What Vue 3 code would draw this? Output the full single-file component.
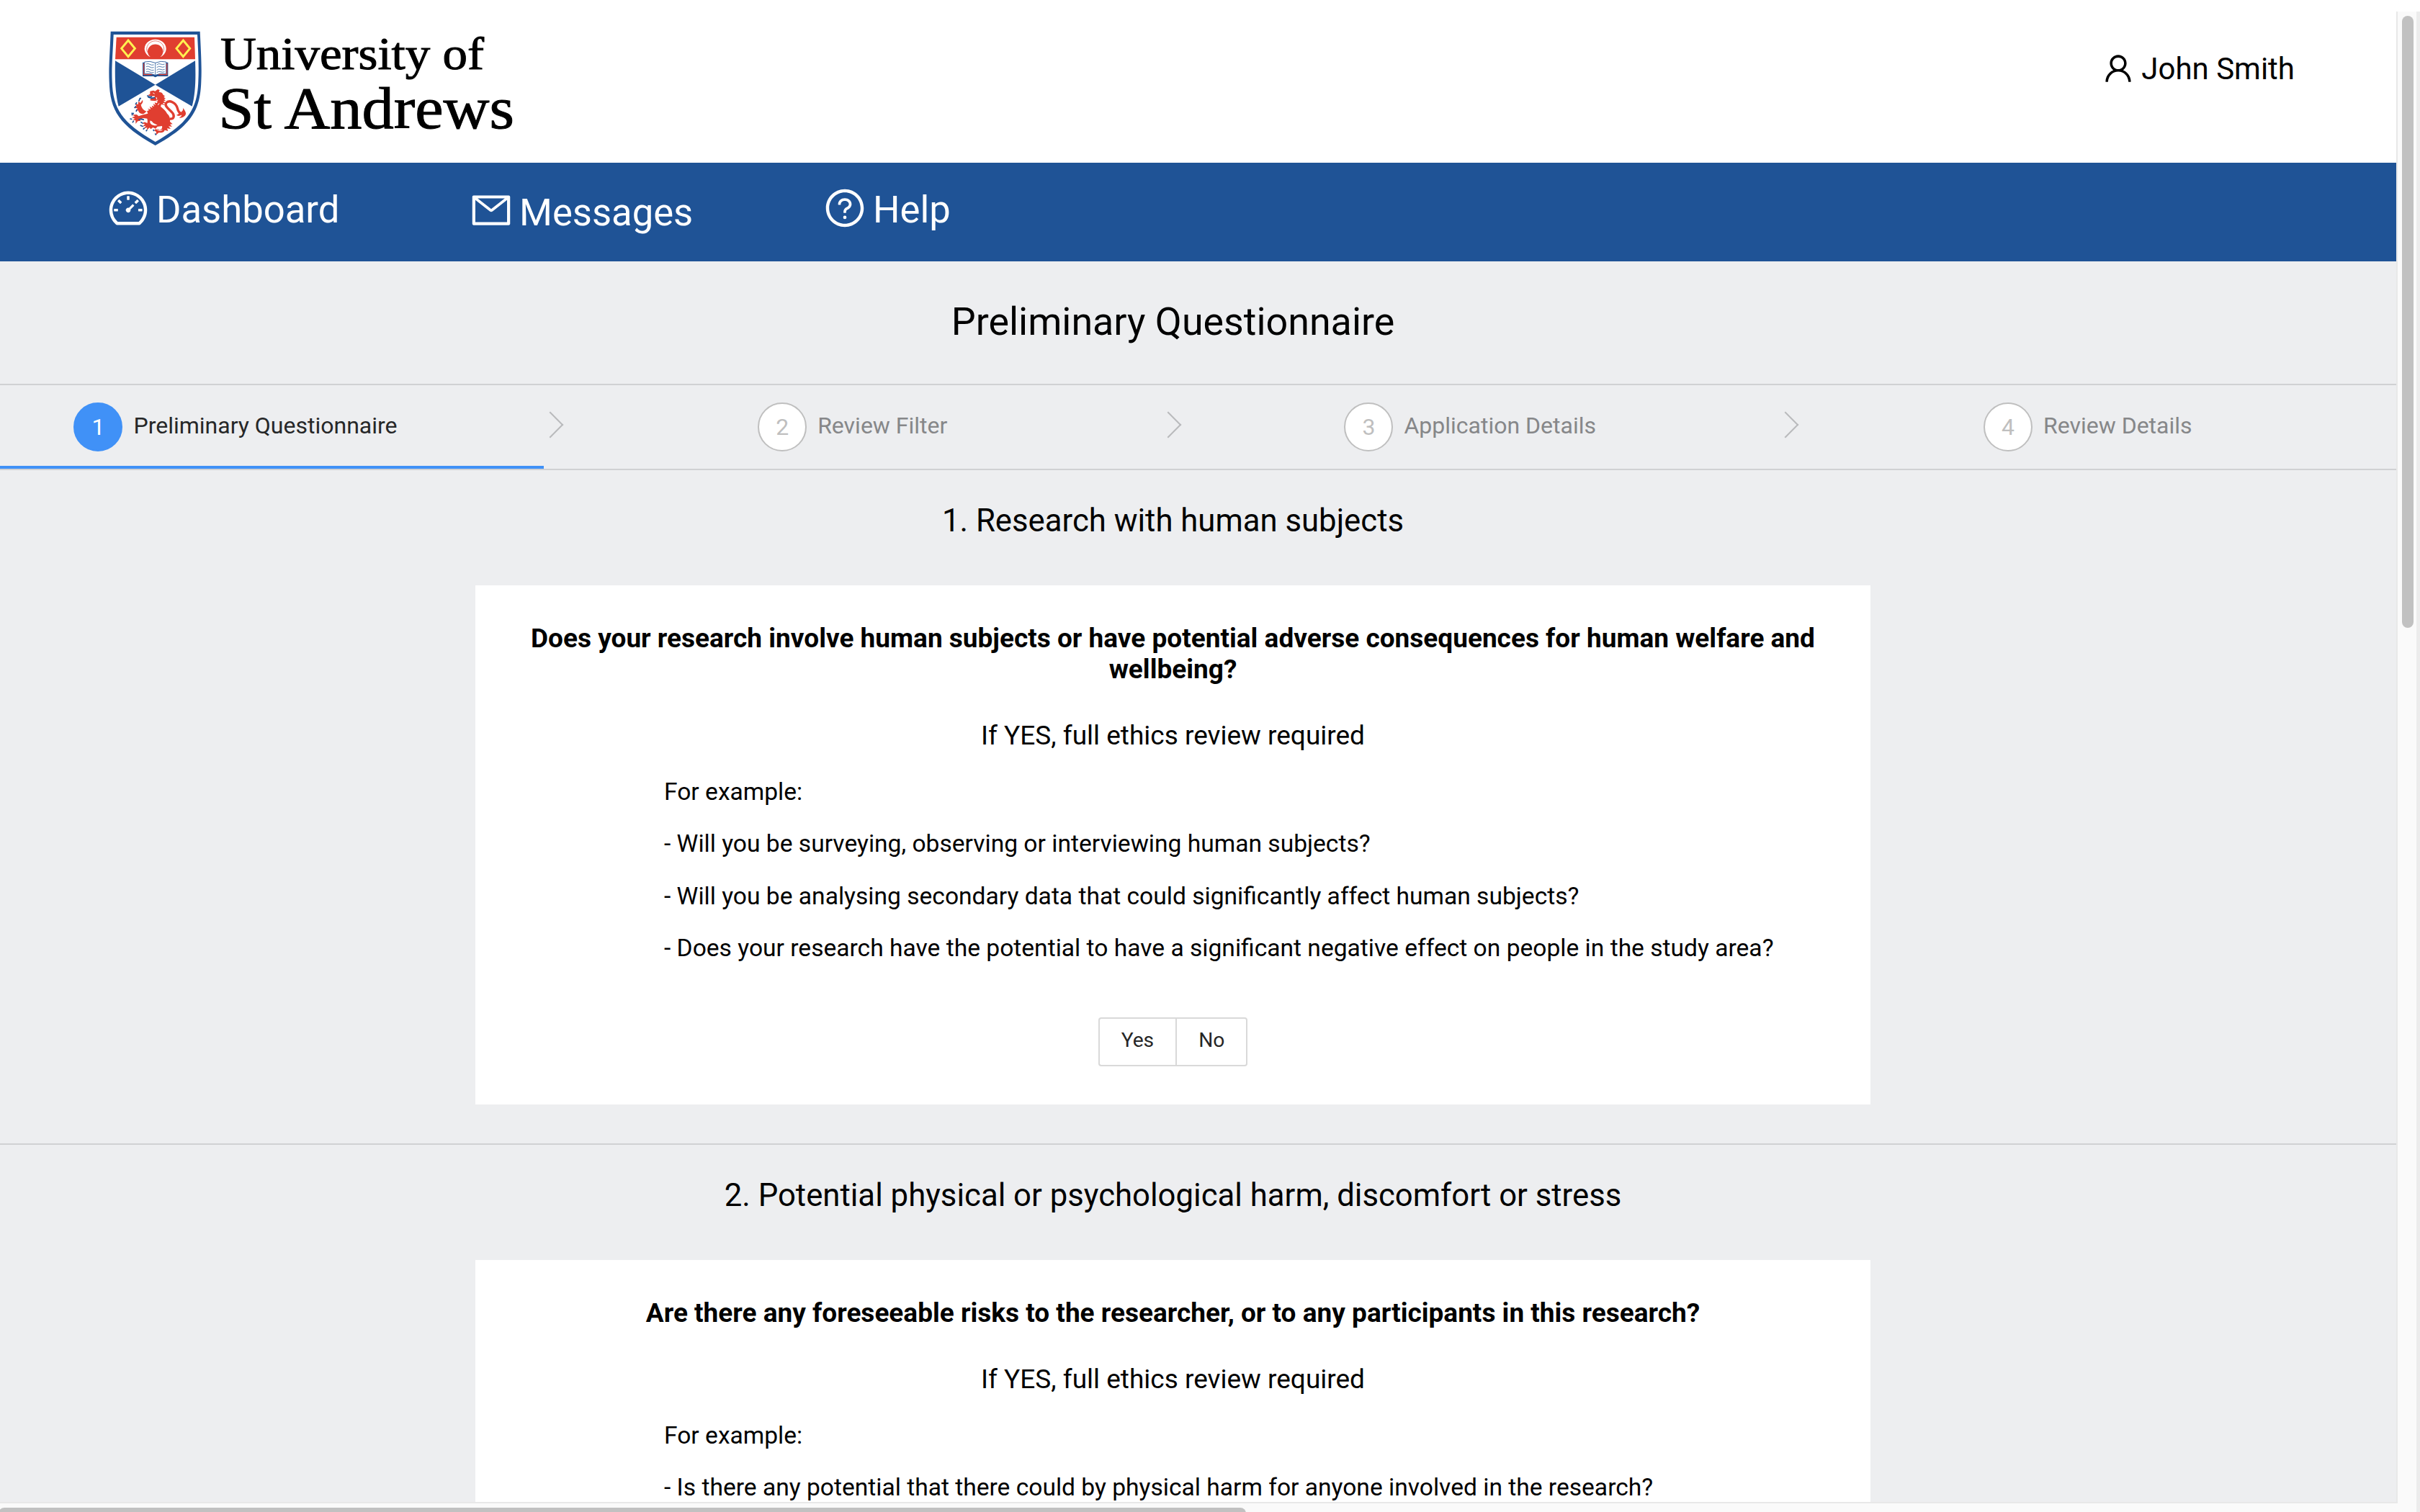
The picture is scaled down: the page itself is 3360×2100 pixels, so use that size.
<script setup>
const navItems = [
  {
    key: 'dashboard',
    label: 'Dashboard',
    path: 'M924.8 385.6a446.7 446.7 0 0 0-96-142.4 446.7 446.7 0 0 0-142.4-96C631.1 123.8 572.5 112 512 112s-119.1 11.8-174.4 35.2a446.7 446.7 0 0 0-142.4 96 446.7 446.7 0 0 0-96 142.4C75.8 440.9 64 499.5 64 560c0 132.7 58.3 257.7 159.9 343.1l1.7 1.4c5.8 4.8 13.1 7.5 20.6 7.5h531.7c7.5 0 14.8-2.7 20.6-7.5l1.7-1.4C901.7 817.7 960 692.7 960 560c0-60.5-11.9-119.1-35.2-174.4zM761.4 836H262.6A371.12 371.12 0 0 1 140 560c0-99.4 38.7-192.8 109-263 70.3-70.3 163.7-109 263-109 99.4 0 192.8 38.7 263 109 70.3 70.3 109 163.7 109 263 0 105.6-44.5 205.5-122.6 276zM623.5 421.5a8.03 8.03 0 0 0-11.3 0L527.7 506c-18.7-5-39.4-.2-54.1 14.5a55.95 55.95 0 0 0 0 79.2 55.95 55.95 0 0 0 79.2 0 55.87 55.87 0 0 0 14.5-54.1l84.5-84.5c3.1-3.1 3.1-8.2 0-11.3l-28.3-28.3zM490 320h44c4.4 0 8-3.6 8-8v-80c0-4.4-3.6-8-8-8h-44c-4.4 0-8 3.6-8 8v80c0 4.4 3.6 8 8 8zm260 218v44c0 4.4 3.6 8 8 8h80c4.4 0 8-3.6 8-8v-44c0-4.4-3.6-8-8-8h-80c-4.4 0-8 3.6-8 8zm12.7-197.2l-31.1-31.1a8.03 8.03 0 0 0-11.3 0l-56.6 56.6a8.03 8.03 0 0 0 0 11.3l31.1 31.1c3.1 3.1 8.2 3.1 11.3 0l56.6-56.6c3.1-3.1 3.1-8.2 0-11.3zm-458.6-31.1a8.03 8.03 0 0 0-11.3 0l-31.1 31.1a8.03 8.03 0 0 0 0 11.3l56.6 56.6c3.1 3.1 8.2 3.1 11.3 0l31.1-31.1c3.1-3.1 3.1-8.2 0-11.3l-56.6-56.6zM262 530h-80c-4.4 0-8 3.6-8 8v44c0 4.4 3.6 8 8 8h80c4.4 0 8-3.6 8-8v-44c0-4.4-3.6-8-8-8z'
  },
  {
    key: 'messages',
    label: 'Messages',
    path: 'M928 160H96c-17.7 0-32 14.3-32 32v640c0 17.7 14.3 32 32 32h832c17.7 0 32-14.3 32-32V192c0-17.7-14.3-32-32-32zm-40 110.8V792H136V270.8l-27.6-21.5 39.3-50.5 42.8 33.3h643.1l42.8-33.3 39.3 50.5-27.7 21.5zM833.6 232L512 482 190.4 232l-42.8-33.3-39.3 50.5 27.6 21.5 341.6 265.6a55.99 55.99 0 0 0 68.7 0L888 270.8l27.6-21.5-39.3-50.5-42.7 33.2z'
  },
  {
    key: 'help',
    label: 'Help',
    path: 'M512 64C264.6 64 64 264.6 64 512s200.6 448 448 448 448-200.6 448-448S759.4 64 512 64zm0 820c-205.4 0-372-166.6-372-372s166.6-372 372-372 372 166.6 372 372-166.6 372-372 372zM623.6 316.7C593.6 290.4 554 276 512 276s-81.6 14.5-111.6 40.7C369.2 344 352 380.7 352 420v7.6c0 4.4 3.6 8 8 8h48c4.4 0 8-3.6 8-8V420c0-44.1 43.1-80 96-80s96 35.9 96 80c0 31.1-22 59.6-56.1 72.7-21.2 8.1-39.2 22.3-52.1 40.9-13.1 19-19.9 41.8-19.9 64.9V620c0 4.4 3.6 8 8 8h48c4.4 0 8-3.6 8-8v-22.7a48.3 48.3 0 0 1 30.9-44.8c59-22.7 97.1-74.7 97.1-132.5.1-39.3-17.1-76-48.3-103.3zM472 732a40 40 0 1 0 80 0 40 40 0 1 0-80 0z'
  }
]

const steps = ['Preliminary Questionnaire', 'Review Filter', 'Application Details', 'Review Details']

const sections = [
  {
    title: '1. Research with human subjects',
    question:
      'Does your research involve human subjects or have potential adverse consequences for human welfare and wellbeing?',
    note: 'If YES, full ethics review required',
    examples: [
      'For example:',
      '- Will you be surveying, observing or interviewing human subjects?',
      '- Will you be analysing secondary data that could significantly affect human subjects?',
      '- Does your research have the potential to have a significant negative effect on people in the study area?'
    ],
    answers: ['Yes', 'No']
  },
  {
    title: '2. Potential physical or psychological harm, discomfort or stress',
    question: 'Are there any foreseeable risks to the researcher, or to any participants in this research?',
    note: 'If YES, full ethics review required',
    examples: [
      'For example:',
      '- Is there any potential that there could by physical harm for anyone involved in the research?'
    ],
    answers: []
  }
]
</script>

<template>
  <div class="window">
    <div class="viewport">
      <header class="header">
        <svg class="logo" viewBox="0 0 1800 540">
          <path class="navy" d="M41 41H413C417 130 421 190 418 250C414 370 378 432 227 516C76 432 38 370 35 250C32 190 38 130 41 41Z" />
          <path fill="#fff" d="M53 54H402C406 130 409 190 406 250C402 362 366 422 227 501C88 422 50 362 47 250C44 190 50 130 53 54Z" />
          <path class="red" d="M65 65H390L393 157H60Z" />
          <path class="navy" d="M60 163L227 263L74 353C60 300 58 240 60 163ZM393 163L227 263L380 353C394 300 396 240 393 163Z" />
          <path fill="none" stroke="#fff150" stroke-width="9" d="M114 78L142 112L114 146L86 112ZM343 78L371 112L343 146L315 112Z" />
          <path fill="#fff" d="M207 148A45 39 0 1 1 247 148A32 30 0 1 0 207 148Z" />
          <path class="thin-red" d="M194 128A36 34 0 1 1 260 128" />
          <path class="navy" d="M174 170H181V219H219Q227 225 235 219H273V170H280V228H235Q227 235 219 228H174Z" />
          <path class="red" d="M177 174H182V218H215V223H177ZM272 174H277V223H239V218H272Z" />
          <path fill="#fff" stroke="#1f5396" stroke-width="2.5" d="M182 168Q204 162 227 172Q250 162 272 168V217Q250 213 227 223Q204 213 182 217Z" />
          <path class="lines" d="M227 172V222M189 177Q197 173 204 178T221 180M189 188Q197 184 204 189T221 191M189 199Q197 195 204 200T221 202M189 209Q197 206 204 210T221 212M233 180Q241 173 249 177T266 177M233 191Q241 184 249 188T266 188M233 202Q241 195 249 199T266 199M233 212Q241 206 249 209T266 209" />
          <!-- rampant lion -->
          <path class="tail" d="M287 405C304 407 308 394 299 381C284 364 263 352 272 339C285 323 314 339 319 361C321 374 330 384 339 385" />
          <path class="red" d="M343 359C346 367 355 374 354 384C353 394 340 402 326 402C333 397 337 393 337 388C327 395 319 393 315 389C322 388 327 383 329 376C334 379 338 377 338 373C342 371 343 365 343 359Z" />
          <path class="red" d="M205 290L219 287L226 290L237 282L245 285L242 294C251 293 258 298 260 306L267 310L262 314L270 321L263 323L270 330L261 331L269 339L257 339L266 347L252 345L249 354C258 362 270 371 276 383C286 391 290 404 288 417L299 427L288 428L297 438L282 436L291 447L276 445L280 456L266 452C263 464 250 462 241 463L229 473L231 460L222 453C231 444 239 447 245 452C254 449 257 443 255 435L239 437L221 435L236 431L219 423L206 412C202 422 208 430 222 433L238 436L228 446L217 441L208 448L203 442L191 452L193 441L179 446L188 434L174 437L184 427L173 425C179 417 186 419 193 424C195 419 195 411 193 404L178 402L161 407L166 413L154 415L145 426V412L132 409L143 405L129 399L142 395L131 388L144 388C148 385 153 388 157 394C170 388 184 387 196 383L192 373L180 383C170 388 157 381 156 370L149 372L152 361L137 360L149 353L143 342L155 345L157 332L165 339L174 326C177 336 172 342 167 346C169 359 178 371 190 374L201 369L195 362L208 366L203 354L215 360L212 350L222 354L218 342L228 348L224 337L234 340L236 331L222 333L204 327L210 320L222 319L225 310L209 311L195 307L205 302Z" />
          <path fill="none" stroke="#fff" stroke-width="3" d="M217 297L224 301M231 315L233 324M213 331Q227 335 238 327M238 348L243 340M211 415L218 426M231 447Q245 459 256 451" />
          <path class="claws" d="M193 308Q201 317 213 312M196 314L210 319L225 317M158 332L163 320L168 320M144 345L150 337M140 360L147 352M147 375L150 366M131 391L130 382L138 383M130 407L121 405M137 413L132 421M157 408L168 406L180 409M175 424L166 418M176 437L164 432M182 443L176 449M193 451L188 457M222 456L218 450M230 473L226 466" />
          <text x="498" y="197" font-size="190" textLength="1098" lengthAdjust="spacingAndGlyphs">University of</text>
          <text x="490" y="444" font-size="250" textLength="1232" lengthAdjust="spacingAndGlyphs">St Andrews</text>
        </svg>
        <div class="user">
          <svg class="user-icon" viewBox="0 0 1024 1024">
            <path d="M858.5 763.6a374 374 0 0 0-80.6-119.5 375.63 375.63 0 0 0-119.5-80.6c-.4-.2-.8-.3-1.2-.5C719.5 518 760 444.7 760 362c0-137-111-248-248-248S264 225 264 362c0 82.7 40.5 156 102.8 201.1-.4.2-.8.3-1.2.5-44.8 18.9-85 46-119.5 80.6a375.63 375.63 0 0 0-80.6 119.5A371.7 371.7 0 0 0 136 901.8a8 8 0 0 0 8 8.2h60c4.4 0 7.9-3.5 8-7.8 2-77.2 33-149.5 87.8-204.3 56.7-56.7 132-87.9 212.2-87.9s155.5 31.2 212.2 87.9C779 752.7 810 825 812 902.2c.1 4.4 3.6 7.8 8 7.8h60a8 8 0 0 0 8-8.2c-1-47.8-10.9-94.3-29.5-138.2zM512 534c-45.9 0-89.1-17.9-121.6-50.4S340 407.9 340 362c0-45.9 17.9-89.1 50.4-121.6S466.1 190 512 190s89.1 17.9 121.6 50.4S684 316.1 684 362c0 45.9-17.9 89.1-50.4 121.6S557.9 534 512 534z" />
          </svg>
          <span>John Smith</span>
        </div>
      </header>

      <nav class="nav">
        <a v-for="item in navItems" :key="item.key" class="nav-item" :class="item.key">
          <svg class="nav-icon" viewBox="0 0 1024 1024"><path :d="item.path" /></svg>
          <span>{{ item.label }}</span>
        </a>
      </nav>

      <h1 class="page-title">Preliminary Questionnaire</h1>

      <div class="steps">
        <div v-for="(step, i) in steps" :key="step" class="step" :class="{ active: i === 0 }">
          <span class="step-number">{{ i + 1 }}</span>
          <span class="step-title">{{ step }}</span>
          <i v-if="i < 3" class="step-arrow"></i>
        </div>
      </div>

      <section v-for="section in sections" :key="section.title" class="section">
        <h2 class="section-title">{{ section.title }}</h2>
        <div class="card">
          <h3 class="question">{{ section.question }}</h3>
          <p class="note">{{ section.note }}</p>
          <div class="examples">
            <p v-for="line in section.examples" :key="line">{{ line }}</p>
          </div>
          <div v-if="section.answers.length" class="answers">
            <span v-for="answer in section.answers" :key="answer" class="answer">{{ answer }}</span>
          </div>
        </div>
      </section>
    </div>

    <div class="scroll-y"><div class="thumb-y"></div></div>
    <div class="scroll-x"><div class="thumb-x"></div></div>
  </div>
</template>

<style>
body {
  margin: 0;
  overflow: hidden;
}
</style>

<style scoped>
.window {
  width: 3360px;
  height: 2100px;
  overflow: hidden;
  display: grid;
  grid-template: 2086px 14px / 3327px 33px;
  background: #fff;
  color: #000;
  font-family: Roboto, sans-serif;
}
h1, h2, h3, p {
  margin: 0;
  font-weight: 400;
}
.viewport {
  overflow: hidden;
  background: #edeef0;
}
.header {
  box-sizing: border-box;
  height: 226px;
  padding: 30px 0 0 140px;
  background: #fff;
  display: flex;
  align-items: flex-start;
}
.logo {
  width: 600px;
  height: 180px;
  font-family: "Liberation Serif", serif;
}
.logo text {
  stroke: #000;
  stroke-width: 3;
}
.navy { fill: #1f5396; }
.red { fill: #e03e30; }
.thin-red { fill: none; stroke: #e03e30; stroke-width: 2; }
.lines { fill: none; stroke: #1f5396; stroke-width: 2.2; }
.tail { fill: none; stroke: #e03e30; stroke-width: 10; }
.claws { fill: none; stroke: #1f5396; stroke-width: 5; }
.user {
  margin: 41px 141px 0 auto;
  display: flex;
  font-size: 42px;
  line-height: 50px;
}
.user-icon {
  width: 48px;
  height: 48px;
  margin-right: 8px;
}
.nav {
  height: 137px;
  padding-left: 148px;
  background: #1f5396;
  color: #fff;
  display: flex;
}
.nav-item {
  display: flex;
  width: 504px;
  font-size: 52.6px;
  line-height: 60px;
  padding-top: 34px;
}
.nav-item span { margin-top: 1px; }
.nav-item.messages {
  width: 491px;
  padding-top: 37px;
}
.nav-item.messages span { margin-top: 2px; }
.nav-icon {
  width: 60px;
  height: 60px;
  margin-right: 9px;
  fill: #fff;
  position: relative;
  top: -1px;
}
.page-title {
  width: 3257px;
  height: 170px;
  box-sizing: border-box;
  padding-top: 53px;
  font-size: 53.8px;
  line-height: 62px;
  text-align: center;
}
.steps {
  box-sizing: border-box;
  height: 120px;
  border-top: 2px solid #d0d1d3;
  border-bottom: 2px solid #d0d1d3;
  display: flex;
}
.step {
  box-sizing: border-box;
  flex: none;
  position: relative;
  width: 857.5px;
  padding-right: 54px;
  display: flex;
  align-items: center;
  justify-content: center;
  font-size: 32px;
  color: #868789;
}
.step:first-child {
  width: 782px;
  padding: 0 128px 0 0;
}
.step.active {
  color: #262728;
}
.step.active::after {
  content: "";
  position: absolute;
  left: 0;
  bottom: 0;
  width: 755px;
  height: 4px;
  background: #4091f7;
}
.step-number {
  box-sizing: border-box;
  width: 68px;
  height: 68px;
  border: 2px solid #bfbfbf;
  border-radius: 50%;
  background: #fff;
  color: #bfbfbf;
  line-height: 64px;
  text-align: center;
  margin-right: 15px;
}
.active .step-number {
  background: #4091f7;
  border-color: #4091f7;
  color: #fff;
}
.step-title {
  line-height: 44px;
  margin-bottom: 5px;
}
.step-arrow {
  box-sizing: border-box;
  position: absolute;
  right: 5px;
  top: 42px;
  width: 26px;
  height: 26px;
  border: solid #b9babc;
  border-width: 2px 2px 0 0;
  transform: rotate(45deg);
}
.section {
  box-sizing: border-box;
  padding-bottom: 54px;
  border-bottom: 2px solid #d0d1d3;
}
.section-title {
  width: 3257px;
  height: 160px;
  box-sizing: border-box;
  padding-top: 45px;
  font-size: 43.7px;
  line-height: 50px;
  text-align: center;
}
.card {
  box-sizing: border-box;
  width: 1937px;
  margin-left: 660px;
  padding: 52px 60px 53px;
  background: #fff;
}
.question {
  font-size: 37px;
  line-height: 43px;
  font-weight: 700;
  text-align: center;
}
.note {
  margin-top: 49px;
  font-size: 37px;
  line-height: 43px;
  text-align: center;
}
.examples {
  margin: 21px 0 0 202px;
  font-size: 33.6px;
  line-height: 72.4px;
  white-space: nowrap;
}
.answers {
  margin-top: 59.4px;
  display: flex;
  justify-content: center;
}
.answer {
  box-sizing: border-box;
  height: 68px;
  border: 2px solid #d9d9d9;
  padding: 0 30px;
  font-size: 28.2px;
  line-height: 59px;
  color: #262626;
}
.answer:first-child {
  border-right: 0;
  border-radius: 4px 0 0 4px;
}
.answer:last-child {
  border-radius: 0 4px 4px 0;
}
.scroll-y {
  box-sizing: border-box;
  grid-row: 1 / 3;
  grid-column: 2;
  margin-top: 16px;
  padding: 6px 0 0 6px;
  border-left: 2px solid #e8e8e8;
  border-right: 5px solid #ececec;
  background: #fafafa;
}
.thumb-y {
  width: 16px;
  height: 850px;
  border-radius: 8px;
  background: #c1c1c1;
}
.scroll-x {
  box-sizing: border-box;
  grid-row: 2;
  grid-column: 1;
  border-top: 2px solid #e8e8e8;
  padding-top: 6px;
  margin-right: -2px;
  overflow: hidden;
  background: #fafafa;
}
.thumb-x {
  width: 1732px;
  height: 16px;
  margin-left: -2px;
  border-radius: 8px;
  background: #c1c1c1;
}
</style>
